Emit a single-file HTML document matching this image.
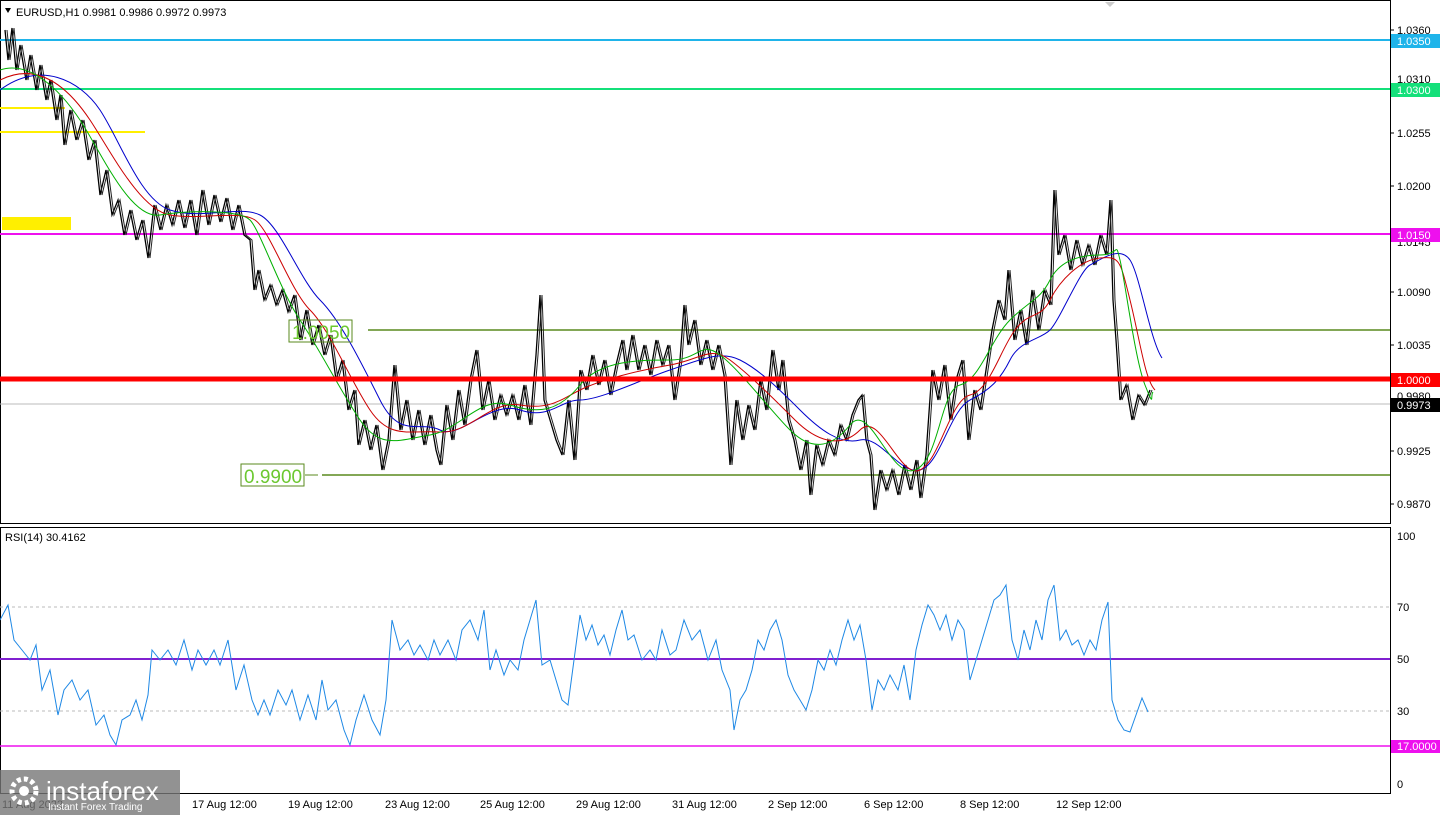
<!DOCTYPE html>
<html><head><meta charset="utf-8"><style>
html,body{margin:0;padding:0;background:#fff;}
svg{display:block;font-family:"Liberation Sans",sans-serif;}
</style></head><body>
<svg width="1445" height="815" viewBox="0 0 1445 815" xmlns="http://www.w3.org/2000/svg">
<defs>
<path id="pr" d="M5,30 L8,60 L12,28 L16,70 L20,45 L26,80 L30,55 L36,90 L40,65 L46,100 L50,80 L56,120 L60,95 L64,145 L70,110 L76,140 L82,120 L88,160 L94,140 L100,195 L106,170 L112,215 L118,200 L124,235 L130,210 L136,240 L142,220 L148,258 L154,205 L160,230 L166,205 L172,225 L178,200 L184,228 L190,200 L196,235 L202,190 L208,225 L214,195 L220,222 L226,198 L232,230 L238,205 L244,235 L250,240 L254,290 L258,270 L264,300 L270,285 L276,305 L282,290 L288,312 L294,295 L300,340 L306,310 L312,345 L318,325 L324,355 L330,335 L336,380 L342,360 L348,410 L354,390 L358,445 L364,420 L370,450 L376,425 L382,470 L388,440 L394,365 L400,430 L406,400 L412,440 L418,410 L424,445 L430,415 L436,450 L440,465 L446,405 L452,440 L458,390 L464,425 L470,380 L476,350 L482,410 L488,380 L494,420 L500,395 L506,415 L512,395 L518,420 L524,385 L530,425 L536,355 L540,295 L544,400 L550,420 L556,440 L562,455 L568,400 L574,460 L580,370 L586,390 L592,355 L598,385 L604,360 L610,395 L616,365 L622,340 L626,370 L632,335 L638,370 L644,345 L650,375 L656,340 L662,365 L668,345 L674,400 L680,360 L684,305 L688,345 L694,320 L700,365 L706,340 L712,370 L718,345 L724,375 L730,465 L736,400 L742,440 L748,405 L754,430 L760,380 L766,410 L772,350 L778,390 L782,360 L788,420 L794,440 L800,470 L806,440 L810,495 L816,445 L822,465 L828,440 L834,455 L840,425 L846,440 L852,415 L858,400 L862,395 L866,440 L870,455 L874,510 L880,470 L886,490 L892,470 L898,495 L904,465 L910,490 L916,460 L920,498 L926,455 L932,370 L938,400 L944,365 L950,420 L956,380 L962,360 L968,440 L974,390 L980,410 L986,370 L992,330 L998,300 L1004,320 L1008,270 L1014,340 L1020,310 L1026,345 L1032,290 L1038,330 L1044,290 L1050,305 L1054,190 L1058,255 L1064,235 L1070,270 L1076,240 L1082,265 L1088,245 L1094,265 L1100,235 L1106,255 L1110,200 L1113,300 L1116,340 L1120,400 L1126,385 L1132,420 L1138,395 L1144,405 L1150,390"/>
</defs>
<rect width="1445" height="815" fill="#fff"/>
<rect x="0.5" y="0.5" width="1390" height="523" fill="none" stroke="#000"/>
<rect x="0.5" y="527.5" width="1390" height="266" fill="none" stroke="#000"/>
<line x1="0" y1="40" x2="1390" y2="40" stroke="#1fb4ea" stroke-width="2"/>
<line x1="0" y1="89" x2="1390" y2="89" stroke="#14e07a" stroke-width="2"/>
<line x1="0" y1="234" x2="1390" y2="234" stroke="#ee10ee" stroke-width="2"/>
<line x1="368" y1="330" x2="1390" y2="330" stroke="#5a8a1e" stroke-width="1.5"/>
<line x1="322" y1="475" x2="1390" y2="475" stroke="#5a8a1e" stroke-width="1.5"/>
<line x1="305" y1="475" x2="318" y2="475" stroke="#5a8a1e"/>
<line x1="0" y1="404" x2="1390" y2="404" stroke="#bbb" stroke-width="1"/>
<line x1="0" y1="108" x2="65" y2="108" stroke="#ffef00" stroke-width="2"/>
<line x1="0" y1="132" x2="145" y2="132" stroke="#ffef00" stroke-width="2"/>
<rect x="2" y="217" width="69" height="13" fill="#ffef00"/>
<use href="#pr" fill="none" stroke="#000" stroke-width="1.3"/>
<use href="#pr" x="2" fill="none" stroke="#222" stroke-width="1"/>
<path fill="none" stroke="#0000cc" stroke-width="1" d="M0,90 C40,60 80,80 100,110 S140,200 170,210 S240,205 260,215 S300,280 320,300 S360,360 380,400 S420,420 440,430 S490,400 520,410 S560,400 580,400 S640,380 670,370 S720,350 740,360 S780,390 800,410 S840,445 860,440 S900,475 920,470 S950,410 970,400 S1000,380 1010,360 S1040,340 1050,330 S1080,270 1090,265 S1120,245 1130,260 S1150,340 1162,358"/>
<path fill="none" stroke="#cc0000" stroke-width="1" d="M0,80 C40,60 70,90 90,120 S140,210 170,215 S240,210 255,220 S290,290 310,310 S350,380 370,410 S410,430 440,432 S490,400 520,405 S560,400 580,390 S640,370 670,365 S710,345 730,360 S775,400 795,420 S840,450 860,430 S900,480 920,470 S950,400 970,395 S1000,350 1015,330 S1040,320 1050,300 S1080,260 1100,258 S1120,260 1130,300 S1145,380 1155,390"/>
<path fill="none" stroke="#00b000" stroke-width="1" d="M0,70 C30,60 60,90 80,120 S130,220 160,215 S240,210 250,220 S280,290 300,320 S340,390 360,420 S400,440 430,435 S480,395 510,405 S560,410 580,385 S640,360 670,360 S700,340 720,355 S770,410 790,430 S830,450 850,425 S890,480 915,470 S940,390 960,385 S990,340 1010,320 S1040,300 1050,280 S1080,255 1100,255 S1115,240 1120,260 S1135,360 1145,385 S1150,395 1153,392"/>
<rect x="289" y="320" width="63" height="22" fill="none" stroke="#5a8a1e"/>
<text x="292" y="339" font-size="19" fill="#6cc830">1.0050</text>
<rect x="241" y="464" width="63" height="22" fill="none" stroke="#5a8a1e"/>
<text x="244" y="483" font-size="19" fill="#6cc830">0.9900</text>
<line x1="0" y1="379" x2="1390" y2="379" stroke="#ff0000" stroke-width="5"/>
<path d="M5,8 L11,8 L8,13 Z" fill="#000"/>
<text x="16" y="16" font-size="11" fill="#000">EURUSD,H1  0.9981 0.9986 0.9972 0.9973</text>
<path d="M1105,2 L1115,2 L1110,7 Z" fill="#ccc"/>
<g font-size="11" fill="#000">
<line x1="1390" y1="30" x2="1394" y2="30" stroke="#000"/><text x="1397" y="34">1.0360</text>
<text x="1397" y="83">1.0310</text>
<line x1="1390" y1="133" x2="1394" y2="133" stroke="#000"/><text x="1397" y="137">1.0255</text>
<line x1="1390" y1="186" x2="1394" y2="186" stroke="#000"/><text x="1397" y="190">1.0200</text>
<text x="1397" y="246">1.0145</text>
<line x1="1390" y1="292" x2="1394" y2="292" stroke="#000"/><text x="1397" y="296">1.0090</text>
<line x1="1390" y1="345" x2="1394" y2="345" stroke="#000"/><text x="1397" y="349">1.0035</text>
<text x="1397" y="400">0.9980</text>
<line x1="1390" y1="451" x2="1394" y2="451" stroke="#000"/><text x="1397" y="455">0.9925</text>
<line x1="1390" y1="504" x2="1394" y2="504" stroke="#000"/><text x="1397" y="508">0.9870</text>
</g>
<g font-size="11" fill="#fff">
<rect x="1391" y="34" width="49" height="14" fill="#1fb4ea"/><text x="1397" y="45">1.0350</text>
<rect x="1391" y="83" width="49" height="14" fill="#14e07a"/><text x="1397" y="94">1.0300</text>
<rect x="1391" y="228" width="49" height="14" fill="#ee10ee"/><text x="1397" y="239">1.0150</text>
<rect x="1391" y="373" width="49" height="14" fill="#ff0000"/><text x="1397" y="384">1.0000</text>
<rect x="1391" y="398" width="49" height="14" fill="#000"/><text x="1397" y="409">0.9973</text>
</g>
<text x="5" y="541" font-size="11" fill="#000">RSI(14) 30.4162</text>
<line x1="0" y1="607" x2="1390" y2="607" stroke="#bbb" stroke-dasharray="3,3"/>
<line x1="0" y1="711" x2="1390" y2="711" stroke="#bbb" stroke-dasharray="3,3"/>
<line x1="0" y1="659" x2="1390" y2="659" stroke="#8020d0" stroke-width="2"/>
<line x1="0" y1="746" x2="1390" y2="746" stroke="#ee10ee" stroke-width="1.5"/>
<path fill="none" stroke="#1e88e5" stroke-width="1" d="M0,620 L8,605 L14,640 L22,650 L30,660 L36,645 L42,690 L50,670 L58,715 L64,690 L72,680 L80,700 L88,690 L96,725 L104,715 L110,735 L116,745 L122,720 L130,715 L136,700 L142,720 L148,695 L152,650 L160,660 L168,650 L176,665 L184,640 L192,670 L198,650 L206,665 L214,650 L220,665 L228,640 L236,690 L244,665 L252,700 L258,715 L264,700 L270,715 L278,690 L286,705 L292,690 L300,720 L308,695 L316,720 L322,680 L328,710 L336,700 L344,730 L350,745 L356,720 L364,695 L372,720 L380,735 L386,700 L392,620 L400,650 L408,640 L414,655 L420,645 L428,660 L434,640 L440,655 L448,640 L456,660 L462,630 L470,620 L478,640 L484,610 L490,670 L496,650 L504,675 L510,660 L518,670 L524,640 L530,620 L536,600 L542,665 L550,660 L556,680 L562,700 L568,705 L574,660 L580,615 L586,640 L592,625 L598,645 L604,635 L610,655 L616,630 L622,610 L628,640 L634,635 L642,660 L650,650 L656,660 L662,630 L670,655 L676,650 L684,620 L692,640 L700,630 L708,660 L716,640 L722,670 L730,690 L734,730 L740,700 L746,690 L752,670 L758,640 L764,650 L770,630 L776,620 L782,640 L788,675 L794,690 L800,700 L806,710 L812,690 L818,660 L824,670 L830,650 L836,665 L842,640 L848,620 L854,640 L860,625 L866,660 L872,710 L878,680 L884,690 L890,675 L898,690 L904,665 L910,700 L916,650 L922,625 L928,605 L934,615 L940,630 L946,615 L952,640 L958,620 L964,630 L970,680 L976,660 L982,640 L988,620 L994,600 L1000,595 L1006,585 L1012,640 L1018,660 L1024,630 L1030,650 L1036,620 L1042,640 L1048,600 L1054,585 L1060,640 L1066,630 L1072,645 L1078,640 L1084,655 L1090,640 L1096,650 L1102,620 L1108,602 L1112,700 L1118,720 L1124,730 L1130,732 L1136,715 L1142,698 L1148,712"/>
<g font-size="11" fill="#000">
<text x="1397" y="540">100</text>
<text x="1397" y="611">70</text>
<text x="1397" y="663">50</text>
<text x="1397" y="715">30</text>
<text x="1397" y="788">0</text>
</g>
<rect x="1391" y="740" width="49" height="13" fill="#ee10ee"/><text x="1397" y="750" font-size="11" fill="#fff">17.0000</text>
<g font-size="11" fill="#000">
<text x="192" y="808">17 Aug 12:00</text>
<text x="288" y="808">19 Aug 12:00</text>
<text x="385" y="808">23 Aug 12:00</text>
<text x="480" y="808">25 Aug 12:00</text>
<text x="576" y="808">29 Aug 12:00</text>
<text x="672" y="808">31 Aug 12:00</text>
<text x="768" y="808">2 Sep 12:00</text>
<text x="864" y="808">6 Sep 12:00</text>
<text x="960" y="808">8 Sep 12:00</text>
<text x="1056" y="808">12 Sep 12:00</text>
<text x="2" y="808">11 Aug 2022</text>
</g>
<rect x="0" y="770" width="180" height="45" fill="#777" opacity="0.8"/>
<circle cx="24" cy="791" r="12" fill="none" stroke="#fff" stroke-width="5" stroke-dasharray="4,3"/>
<circle cx="24" cy="791" r="5" fill="#fff"/>
<text x="46" y="800" font-size="26" fill="#fff">instaforex</text>
<text x="48" y="810" font-size="10" fill="#fff">Instant Forex Trading</text>
</svg>
</body></html>
